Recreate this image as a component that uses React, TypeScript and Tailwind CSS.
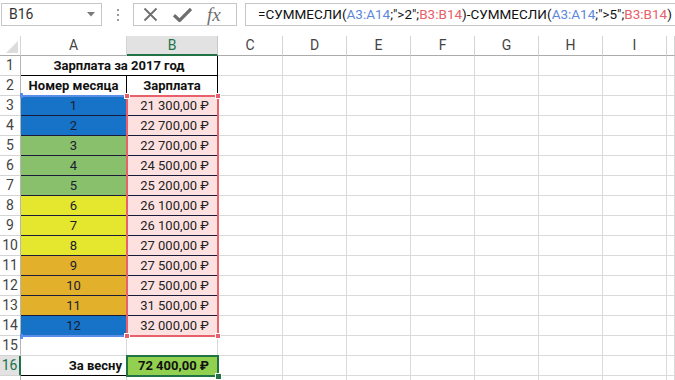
import React from "react";

const COLS = ["A", "B", "C", "D", "E", "F", "G", "H", "I", ""];
const GRID = "grid grid-cols-[21px_106px_91px_65px_64px_64px_64px_64px_64px_64px_1fr]";

type Row = { n: number; fill: string; pay: string };
const DATA: Row[] = [
  { n: 1, fill: "bg-[#1673c8]", pay: "21 300,00 ₽" },
  { n: 2, fill: "bg-[#1673c8]", pay: "22 700,00 ₽" },
  { n: 3, fill: "bg-[#88c06c]", pay: "22 700,00 ₽" },
  { n: 4, fill: "bg-[#88c06c]", pay: "24 500,00 ₽" },
  { n: 5, fill: "bg-[#88c06c]", pay: "25 200,00 ₽" },
  { n: 6, fill: "bg-[#e5e62e]", pay: "26 100,00 ₽" },
  { n: 7, fill: "bg-[#e5e62e]", pay: "26 100,00 ₽" },
  { n: 8, fill: "bg-[#e5e62e]", pay: "27 000,00 ₽" },
  { n: 9, fill: "bg-[#e3b02b]", pay: "27 500,00 ₽" },
  { n: 10, fill: "bg-[#e3b02b]", pay: "27 500,00 ₽" },
  { n: 11, fill: "bg-[#e3b02b]", pay: "31 500,00 ₽" },
  { n: 12, fill: "bg-[#1673c8]", pay: "32 000,00 ₽" },
];

function RowHead({ n, selected }: { n?: number; selected?: boolean }) {
  return (
    <div
      className={
        "h-[20px] flex items-center justify-center text-[14px] border-b " +
        (selected
          ? "bg-[#e2e2e2] text-[#217346] border-b-[#d4d4d4] border-r-2 border-r-[#217346]"
          : "bg-white text-[#444] border-b-[#d4d4d4] border-r border-r-[#b5b5b5]")
      }
    >
      {n}
    </div>
  );
}

function Empty({ count }: { count: number }) {
  return (
    <>
      {Array.from({ length: count }).map((_, i) => (
        <div key={i} className="h-[20px] border-r border-b border-[#dadada]" />
      ))}
    </>
  );
}

function Formula() {
  const blue = "text-[#5c87dc]";
  const red = "text-[#e8606a]";
  return (
    <span className="whitespace-nowrap">
      =СУММЕСЛИ(<span className={blue}>A3:A14</span>;"&gt;2";<span className={red}>B3:B14</span>)-СУММЕСЛИ(
      <span className={blue}>A3:A14</span>;"&gt;5";<span className={red}>B3:B14</span>)
    </span>
  );
}

export default function App() {
  return (
    <div className="w-[675px] h-[380px] overflow-hidden bg-white font-['Roboto',sans-serif] text-[#222] select-none">
      {/* Formula bar */}
      <div className="h-[36px] flex items-start pt-[3px] pl-[1px]">
        <div className="w-[101px] h-[23px] border border-[#c6c6c6] flex items-center justify-between pl-[7px] pr-[6px] text-[14px] text-[#333]">
          <span>B16</span>
          <svg width="8" height="5" viewBox="0 0 8 5">
            <path d="M0 0h8L4 4.5z" fill="#7a7a7a" />
          </svg>
        </div>
        <div className="w-[31px] h-[23px] flex flex-col items-center justify-center gap-[3px]">
          <div className="w-[2px] h-[2px] bg-[#9a9a9a]" />
          <div className="w-[2px] h-[2px] bg-[#9a9a9a]" />
          <div className="w-[2px] h-[2px] bg-[#9a9a9a]" />
        </div>
        <div className="w-[104px] h-[23px] border border-[#c6c6c6] flex items-center pl-[9px] gap-[15px]">
          <svg width="15" height="15" viewBox="0 0 15 15">
            <path d="M1.5 1.5L13.5 13.5M13.5 1.5L1.5 13.5" stroke="#6e6e6e" strokeWidth="1.8" />
          </svg>
          <svg width="19" height="15" viewBox="0 0 19 15">
            <path d="M1 8.2L6.6 13.5L18 2" stroke="#6e6e6e" strokeWidth="3.2" fill="none" />
          </svg>
          <span className="font-['Liberation_Serif',serif] italic text-[19px] text-[#6e6e6e] leading-none -mt-[1px]">
            fx
          </span>
        </div>
        <div className="ml-[8px] flex-1 h-[23px] border border-[#c6c6c6] border-r-0 flex items-center pl-[12px] text-[13.5px] text-[#111] overflow-hidden">
          <Formula />
        </div>
      </div>

      {/* Column headers */}
      <div className={GRID + " h-[20px]"}>
        <div className="h-[20px] border-r border-b border-r-[#d4d4d4] border-b-[#ababab] relative">
          <svg className="absolute left-[6px] top-[5px]" width="12" height="12" viewBox="0 0 12 12">
            <path d="M12 0V12H0z" fill="#dcdcdc" />
          </svg>
        </div>
        {COLS.map((c, i) =>
          c === "B" ? (
            <div
              key={i}
              className="h-[20px] bg-[#e2e2e2] border-r border-r-[#c8c8c8] border-b-2 border-b-[#217346] flex items-center justify-center text-[14px] text-[#217346] pt-[1px]"
            >
              {c}
            </div>
          ) : (
            <div
              key={i}
              className="h-[20px] border-r border-r-[#d4d4d4] border-b border-b-[#ababab] flex items-center justify-center text-[14px] text-[#444]"
            >
              {c}
            </div>
          )
        )}
      </div>

      {/* Body */}
      <div className="relative">
        {/* Row 1 */}
        <div className={GRID}>
          <RowHead n={1} />
          <div className="col-span-2 h-[20px] border-r border-b border-black flex items-center justify-center font-bold text-[13px] text-[#111]">
            Зарплата за 2017 год
          </div>
          <Empty count={8} />
        </div>
        {/* Row 2 */}
        <div className={GRID}>
          <RowHead n={2} />
          <div className="h-[20px] border-r border-b border-black flex items-center justify-center font-bold text-[13px] text-[#111]">
            Номер месяца
          </div>
          <div className="h-[20px] border-r border-b border-black flex items-center justify-center font-bold text-[13px] text-[#111]">
            Зарплата
          </div>
          <Empty count={8} />
        </div>
        {/* Data rows */}
        {DATA.map((r, i) => (
          <div key={i} className={GRID}>
            <RowHead n={i + 3} />
            <div
              className={
                "h-[20px] border-r border-b border-[#1a1a3a] flex items-center justify-center text-[13px] text-[#1a2030] " +
                r.fill
              }
            >
              {r.n}
            </div>
            <div className="h-[20px] border-r border-b border-[#1a1a3a] bg-[#fde1e1] flex items-center justify-end pr-[8px] text-[13px] text-[#222]">
              {r.pay}
            </div>
            <Empty count={8} />
          </div>
        ))}
        {/* Row 15 */}
        <div className={GRID}>
          <RowHead n={15} />
          <Empty count={10} />
        </div>
        {/* Row 16 */}
        <div className={GRID}>
          <RowHead n={16} selected />
          <div className="h-[20px] border-r border-b border-black flex items-center justify-end pr-[4px] font-bold text-[13px] text-[#111]">
            За весну
          </div>
          <div className="h-[20px] border-r border-b border-black bg-[#92d050] flex items-center justify-end pr-[8px] font-bold text-[13px] text-[#111]">
            72 400,00 ₽
          </div>
          <Empty count={8} />
        </div>
        {/* Row 17 (cut off) */}
        <div className={GRID}>
          <RowHead />
          <Empty count={10} />
        </div>

        {/* Blue range A3:A14 */}
        <div className="absolute left-[21px] top-[39px] w-[106px] h-[2px] bg-[#5b8ee6]" />
        <div className="absolute left-[21px] top-[279px] w-[106px] h-[2px] bg-[#5b8ee6]" />
        <div className="absolute left-[20px] top-[37px] w-[3px] h-[5px] bg-[#5b8ee6]" />
        <div className="absolute left-[20px] top-[278px] w-[3px] h-[5px] bg-[#5b8ee6]" />

        {/* Red range B3:B14 */}
        <div className="absolute left-[126px] top-[39px] w-[93px] h-[242px] border-2 border-[#e8606a]" />
        <div className="absolute left-[124px] top-[37px] w-[6px] h-[6px] bg-[#e8606a] border border-white" />
        <div className="absolute left-[215px] top-[37px] w-[6px] h-[6px] bg-[#e8606a] border border-white" />
        <div className="absolute left-[124px] top-[277px] w-[6px] h-[6px] bg-[#e8606a] border border-white" />
        <div className="absolute left-[215px] top-[277px] w-[6px] h-[6px] bg-[#e8606a] border border-white" />

        {/* Active cell B16 */}
        <div className="absolute left-[126px] top-[299px] w-[93px] h-[22px] border-2 border-[#217346]" />
        <div className="absolute left-[215px] top-[317px] w-[7px] h-[7px] bg-[#217346] border border-white" />
      </div>
    </div>
  );
}
